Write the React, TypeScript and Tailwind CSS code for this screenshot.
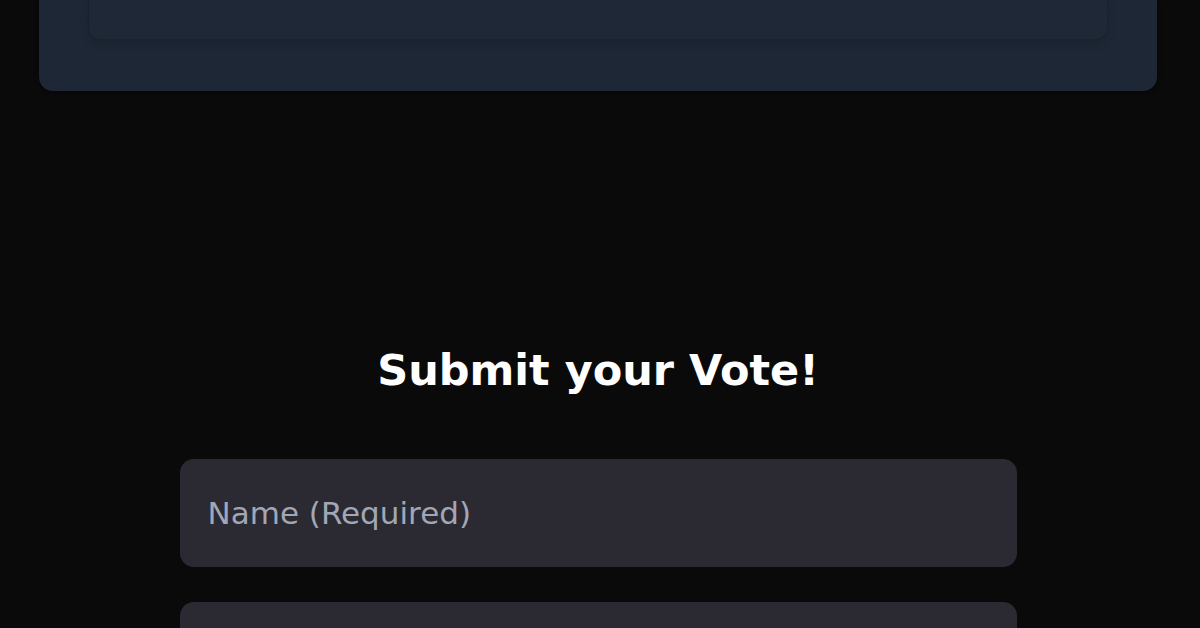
import React from 'react';

export default function App() {
  return (
    <div className="min-h-[628px] w-full overflow-hidden bg-[#0a0a0b]">
      <div className="w-[1196px]">
        {/* results panel, scrolled mostly out of view */}
        <div className="mx-[39px] rounded-b-[14px] bg-[#1e2735] px-[49px] pb-[51px] shadow-[0_2px_4px_rgba(0,0,0,0.4)]">
          <div className="h-[40px] rounded-b-[12px] border border-t-0 border-[#1b222e] bg-[#1e2836] shadow-[0_4px_8px_rgba(0,0,0,0.12)]" />
        </div>

        <h2 className="mt-[258px] text-center font-['DejaVu_Sans',sans-serif] text-[43px] font-bold leading-none text-white">
          Submit your Vote!
        </h2>

        <form className="mx-auto mt-[67px] flex w-[837px] flex-col gap-[35px]">
          <input
            type="text"
            placeholder="Name (Required)"
            className="h-[108px] w-full rounded-[14px] bg-[#2b2a33] px-[28px] font-['DejaVu_Sans',sans-serif] text-[31px] text-white outline-none placeholder:text-[#a1a7b5]"
          />
          <input
            type="text"
            placeholder=""
            className="h-[108px] w-full rounded-[14px] bg-[#2b2a33] px-[28px] font-['DejaVu_Sans',sans-serif] text-[31px] text-white outline-none placeholder:text-[#a1a7b5]"
          />
        </form>
      </div>
    </div>
  );
}
